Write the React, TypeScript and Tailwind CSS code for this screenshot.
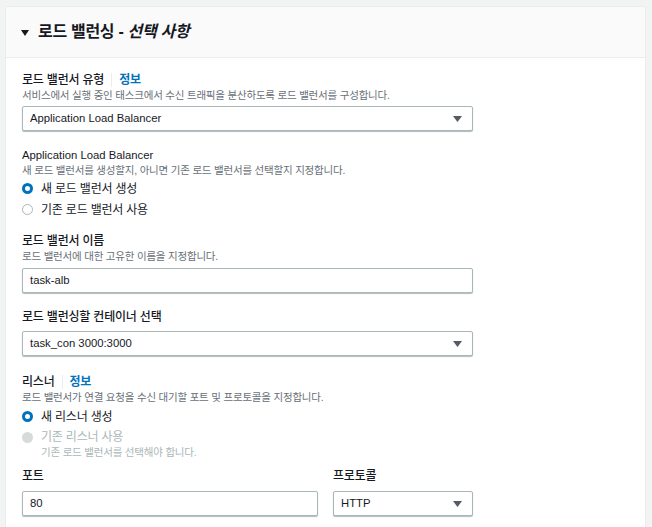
import React from 'react'

const font = { fontFamily: '"Liberation Sans", "Noto Sans CJK KR", sans-serif' }

function Caret() {
  return (
    <svg width="9" height="6" viewBox="0 0 9 6" className="shrink-0">
      <path d="M0 0h9L4.5 6z" fill="#545b64" />
    </svg>
  )
}

function Label({ children, info }: { children: React.ReactNode; info?: boolean }) {
  return (
    <div className="flex items-center text-[12px] leading-[16px] font-medium text-[#16191f] tracking-[-0.2px]">
      <span>{children}</span>
      {info && (
        <>
          <span className="mx-[7px] h-[14px] w-px bg-[#eaeded]" />
          <span className="text-[#0073bb] font-bold">정보</span>
        </>
      )}
    </div>
  )
}

function Desc({ children, muted }: { children: React.ReactNode; muted?: boolean }) {
  return (
    <div className={`text-[10.5px] leading-[15px] tracking-[-0.2px] ${muted ? 'text-[#aab7b8]' : 'text-[#687078]'}`}>
      {children}
    </div>
  )
}

function Select({ value, width }: { value: string; width: string }) {
  return (
    <div
      className={`${width} h-[25px] flex items-center justify-between pl-[7px] pr-[10px] bg-white border border-[#aab7b8] rounded-[2px] shadow-[0_1px_1px_0_rgba(0,28,36,0.3)] text-[11.3px] text-[#16191f]`}
    >
      <span>{value}</span>
      <Caret />
    </div>
  )
}

function Input({ value, width }: { value: string; width: string }) {
  return (
    <div
      className={`${width} h-[25px] flex items-center pl-[7px] bg-white border border-[#aab7b8] rounded-[2px] shadow-[0_1px_1px_0_rgba(0,28,36,0.3)] text-[11.3px] text-[#16191f]`}
    >
      {value}
    </div>
  )
}

function Radio({ checked, disabled, children }: { checked?: boolean; disabled?: boolean; children: React.ReactNode }) {
  let dot = 'border border-[#aab7b8] bg-white'
  if (checked) dot = 'border-[3.5px] border-[#0073bb] bg-white'
  if (disabled) dot = 'bg-[#d5dbdb]'
  return (
    <div className="flex items-center gap-[8px]">
      <span className={`w-[11px] h-[11px] rounded-full box-border ${dot}`} />
      <span className={`text-[12px] tracking-[-0.2px] ${disabled ? 'text-[#aab7b8]' : 'text-[#16191f]'}`}>
        {children}
      </span>
    </div>
  )
}

export default function App() {
  return (
    <div className="w-[652px] h-[527px] overflow-hidden bg-[#f2f3f3] pt-[6px] pl-[5px]" style={font}>
      <div className="w-[641px] h-[530px] bg-white border border-[#eaeded]">
        <div className="h-[51px] flex items-center pl-[15px] bg-[#fafafa] border-b border-[#eaeded]">
          <svg width="8" height="6" viewBox="0 0 8 6" className="mr-[9px] mt-[1px]">
            <path d="M0 0h8L4 6z" fill="#16191f" />
          </svg>
          <h2 className="text-[16px] font-bold text-[#16191f] tracking-[-0.3px]">
            로드 밸런싱 - <i>선택 사항</i>
          </h2>
        </div>

        <div className="pl-[16px] pt-[14px]">
          <Label info>로드 밸런서 유형</Label>
          <Desc>서비스에서 실행 중인 태스크에서 수신 트래픽을 분산하도록 로드 밸런서를 구성합니다.</Desc>
          <div className="mt-[3px]">
            <Select value="Application Load Balancer" width="w-[451px]" />
          </div>

          <div className="mt-[16px] text-[11.3px] leading-[16px] text-[#16191f]">Application Load Balancer</div>
          <Desc>새 로드 밸런서를 생성할지, 아니면 기존 로드 밸런서를 선택할지 지정합니다.</Desc>
          <div className="flex flex-col">
            <div className="h-[21px] flex items-center">
              <Radio checked>새 로드 밸런서 생성</Radio>
            </div>
            <div className="h-[21px] flex items-center">
              <Radio>기존 로드 밸런서 사용</Radio>
            </div>
          </div>

          <div className="mt-[13px]">
            <Label>로드 밸런서 이름</Label>
          </div>
          <Desc>로드 밸런서에 대한 고유한 이름을 지정합니다.</Desc>
          <div className="mt-[4px]">
            <Input value="task-alb" width="w-[451px]" />
          </div>

          <div className="mt-[16px]">
            <Label>로드 밸런싱할 컨테이너 선택</Label>
          </div>
          <div className="mt-[6px]">
            <Select value="task_con 3000:3000" width="w-[451px]" />
          </div>

          <div className="mt-[18px]">
            <Label info>리스너</Label>
          </div>
          <Desc>로드 밸런서가 연결 요청을 수신 대기할 포트 및 프로토콜을 지정합니다.</Desc>
          <div className="mt-[1px] h-[21px] flex items-center">
            <Radio checked>새 리스너 생성</Radio>
          </div>
          <div className="mt-[2px] h-[16px] flex items-center">
            <Radio disabled>기존 리스너 사용</Radio>
          </div>
          <div className="pl-[19px]">
            <Desc muted>기존 로드 밸런서를 선택해야 합니다.</Desc>
          </div>

          <div className="mt-[8px] flex gap-[15px]">
            <div>
              <Label>포트</Label>
              <div className="mt-[7px]">
                <Input value="80" width="w-[296px]" />
              </div>
            </div>
            <div>
              <Label>프로토콜</Label>
              <div className="mt-[7px]">
                <Select value="HTTP" width="w-[140px]" />
              </div>
            </div>
          </div>
        </div>
      </div>
    </div>
  )
}
